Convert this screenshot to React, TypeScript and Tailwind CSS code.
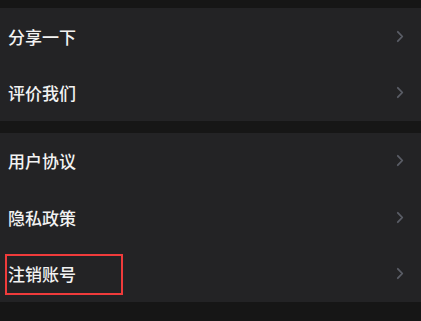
const GROUPS: string[][] = [
  ['分享一下', '评价我们'],
  ['用户协议', '隐私政策', '注销账号'],
];

function Chevron() {
  return (
    <svg width="8" height="13" viewBox="0 0 8 13" fill="none" className="shrink-0">
      <path d="M1.8 1.8 6.3 6.5 1.8 11.2" stroke="#5a5d66" strokeWidth="1.8" strokeLinecap="round" strokeLinejoin="round" />
    </svg>
  );
}

export default function App() {
  return (
    <div
      className="h-[321px] w-[421px] bg-[#161616] pt-[8px] overflow-hidden"
      style={{ fontFamily: '"Noto Sans CJK SC", "Noto Sans", sans-serif' }}
    >
      <div className="flex flex-col gap-[12px]">
        {GROUPS.map((rows, gi) => (
          <div key={gi} className="flex flex-col bg-[#232325]">
            {rows.map((label) => (
              <div key={label} className="relative flex h-[56.4px] items-center justify-between pl-[8px] pr-[17px]">
                <span className="text-[17px] font-medium leading-none text-[#f2f2f2]">{label}</span>
                <Chevron />
                {label === '注销账号' && (
                  <div className="pointer-events-none absolute left-[5px] top-[8.5px] h-[41px] w-[118px] border-2 border-[#ef3b3b]" />
                )}
              </div>
            ))}
          </div>
        ))}
      </div>
    </div>
  );
}
